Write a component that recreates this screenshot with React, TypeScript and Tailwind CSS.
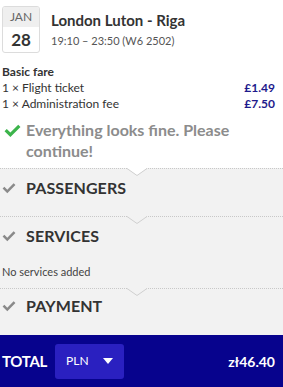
import React from "react";

function Check({ className }: { className: string }) {
  return (
    <svg viewBox="0 0 16 14" className={className} fill="currentColor">
      <path d="M0.5 7.6 L2.6 5.5 L6 8.9 L13.4 1.5 L15.5 3.6 L6 13.1 Z" />
    </svg>
  );
}

function Divider({ notchFill }: { notchFill: string }) {
  return (
    <div className="relative h-0 border-t border-dotted border-[#c8c8c8]">
      <svg className="absolute left-[127px] top-[-1px]" width="20" height="9" viewBox="0 0 20 9">
        <path d="M0 0 L10 7.5 L20 0 Z" fill={notchFill} />
        <path d="M0 0.5 L10 7.5 L20 0.5" fill="none" stroke="#cfcfcf" strokeWidth="1" />
      </svg>
    </div>
  );
}

function StepTitle({ title, height }: { title: string; height: string }) {
  return (
    <div className={`flex items-center pl-[2px] ${height}`}>
      <Check className="w-[14px] h-[12px] text-[#8a8a8a]" />
      <span className="ml-[10px] text-[16px] font-bold text-[#333] tracking-[0.1px]">{title}</span>
    </div>
  );
}

export default function App() {
  return (
    <div className="w-[283px] h-[387px] flex flex-col bg-white font-['Lato',sans-serif] text-[#333] overflow-hidden">
      <div className="flex pl-[2px] pt-[6px]">
        <div className="w-[38px] h-[47px] border border-[#dcdcdc] rounded-[3px] overflow-hidden flex flex-col">
          <div className="h-[21px] bg-[#efefef] flex items-center justify-center text-[12px] text-[#666] pt-[1px]">JAN</div>
          <div className="flex-1 flex items-center justify-center text-[17px] font-bold text-[#333]">28</div>
        </div>
        <div className="ml-[11px] pt-[4px]">
          <div className="text-[15px] font-bold leading-[20px] text-[#333]">London Luton - Riga</div>
          <div className="text-[11px] leading-[16px] text-[#555] mt-[3px]">19:10 – 23:50 (W6 2502)</div>
        </div>
      </div>

      <div className="px-[2px] mt-[11px] text-[12px] leading-[16px]">
        <div className="font-bold text-[#333]">Basic fare</div>
        <div className="flex justify-between pr-[6px]">
          <span>1 × Flight ticket</span>
          <span className="font-bold text-[#1e1a8c]">£1.49</span>
        </div>
        <div className="flex justify-between pr-[6px]">
          <span>1 × Administration fee</span>
          <span className="font-bold text-[#1e1a8c]">£7.50</span>
        </div>
      </div>

      <div className="flex items-start pl-[4px] mt-[7px] pb-[7px]">
        <Check className="w-[17px] h-[15px] text-[#3cb44b] mt-[4px] shrink-0" />
        <div className="ml-[5px] text-[16px] leading-[21px] font-bold text-[#8c8c8c]">
          Everything looks fine. Please continue!
        </div>
      </div>

      <div className="flex-1 bg-[#f2f2f2]">
        <Divider notchFill="#ffffff" />
        <div className="pb-[9px]">
          <StepTitle title="PASSENGERS" height="h-[38px]" />
        </div>
        <Divider notchFill="#f2f2f2" />
        <div className="pb-[8px]">
          <StepTitle title="SERVICES" height="h-[38px]" />
          <div className="mt-[9px] pl-[2px] text-[11px] leading-[16px] text-[#444]">No services added</div>
        </div>
        <Divider notchFill="#f2f2f2" />
        <StepTitle title="PAYMENT" height="h-[34px]" />
      </div>

      <div className="h-[52px] bg-[#07038d] flex items-center pl-[2px] pr-[8px]">
        <span className="text-[15px] font-bold text-white tracking-[-0.3px]">TOTAL</span>
        <button className="ml-[8px] w-[69px] h-[35px] bg-[#2a20c0] rounded-[3px] flex items-center pl-[11px] text-[12px] text-white">
          PLN
          <span className="ml-[14px] w-0 h-0 border-l-[5px] border-r-[5px] border-t-[6px] border-l-transparent border-r-transparent border-t-white" />
        </button>
        <span className="ml-auto text-[14px] font-bold text-white">zł46.40</span>
      </div>
    </div>
  );
}
